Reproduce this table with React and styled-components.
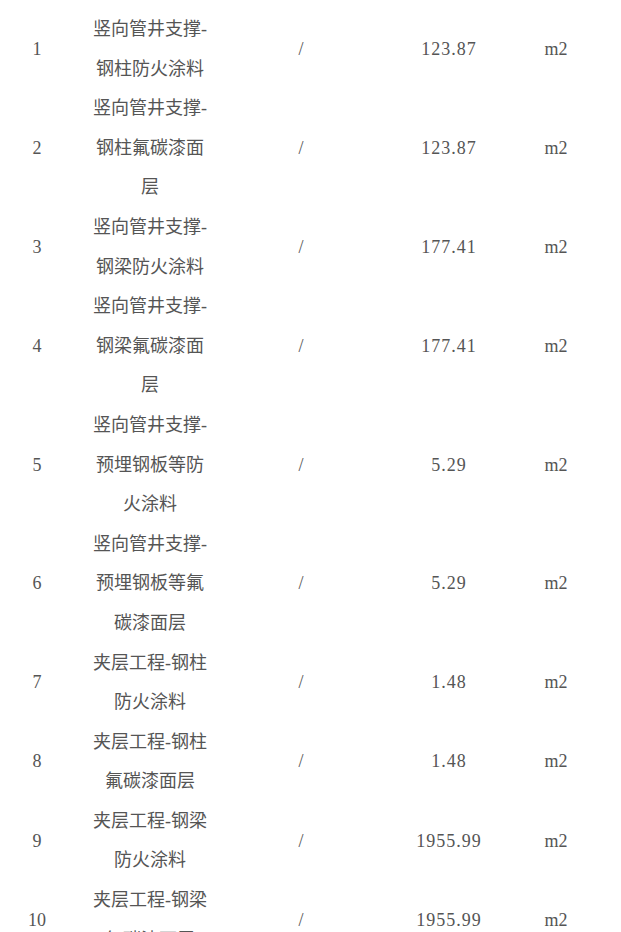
import React from 'react';
import styled, { createGlobalStyle } from 'styled-components';

const GlobalStyle = createGlobalStyle`
  body {
    margin: 0;
    background: #fff;
  }
`;

const Page = styled.div`
  padding-top: 10px;
  width: 621px;
`;

const Table = styled.table`
  border-collapse: collapse;
  table-layout: fixed;
  width: 590px;
  font-family: "Liberation Serif", "Noto Sans CJK SC", serif;
  font-size: 18px;
  line-height: 39.6px;
  color: #555;
`;

const Col = styled.col`
  width: ${(p) => p.$w}px;
`;

const Cell = styled.td`
  box-sizing: border-box;
  padding: 0 ${(p) => p.$pad || 0}px;
  text-align: center;
  vertical-align: middle;
  letter-spacing: ${(p) => (p.$num ? '1px' : 'normal')};
`;

const colWidths = [74, 152, 150, 146, 68];

const rows = [
  ['1', '竖向管井支撑-钢柱防火涂料', '123.87'],
  ['2', '竖向管井支撑-钢柱氟碳漆面层', '123.87'],
  ['3', '竖向管井支撑-钢梁防火涂料', '177.41'],
  ['4', '竖向管井支撑-钢梁氟碳漆面层', '177.41'],
  ['5', '竖向管井支撑-预埋钢板等防火涂料', '5.29'],
  ['6', '竖向管井支撑-预埋钢板等氟碳漆面层', '5.29'],
  ['7', '夹层工程-钢柱防火涂料', '1.48'],
  ['8', '夹层工程-钢柱氟碳漆面层', '1.48'],
  ['9', '夹层工程-钢梁防火涂料', '1955.99'],
  ['10', '夹层工程-钢梁氟碳漆面层', '1955.99'],
];

const App = () => {
  return (
    <Page>
      <GlobalStyle />
      <Table>
        <colgroup>
          {colWidths.map((w, i) => (
            <Col key={i} $w={w} />
          ))}
        </colgroup>
        <tbody>
          {rows.map(([no, name, qty]) => (
            <tr key={no}>
              <Cell>{no}</Cell>
              <Cell $pad={15}>{name}</Cell>
              <Cell>/</Cell>
              <Cell $num>{qty}</Cell>
              <Cell>m2</Cell>
            </tr>
          ))}
        </tbody>
      </Table>
    </Page>
  );
};

export default App;
